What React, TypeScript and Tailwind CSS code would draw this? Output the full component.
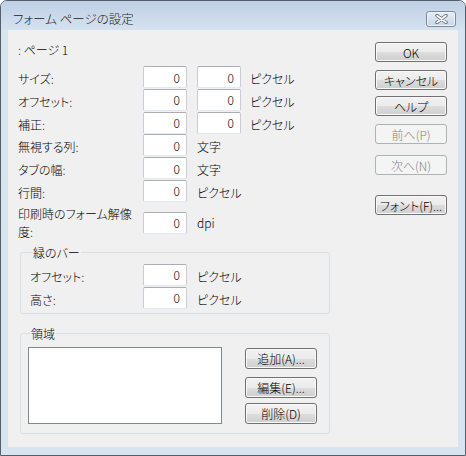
import React from "react";

const Field = ({ className = "" }: { className?: string }) => (
  <div
    className={
      "w-[44px] h-[22px] shrink-0 bg-white border border-t-[#abadb3] border-x-[#c9ccd3] border-b-[#e3e9ef] rounded-[2px] flex items-center justify-end pr-[6px] leading-[15px] " +
      className
    }
  >
    0
  </div>
);

const Btn = ({
  children,
  disabled,
  className = "",
  tall,
}: {
  children: React.ReactNode;
  disabled?: boolean;
  className?: string;
  tall?: boolean;
}) => (
  <div
    className={
      (tall ? "h-[21px] " : "h-[20px] ") +
      "w-[72px] shrink-0 rounded-[3px] border flex items-center justify-center leading-[15px] " +
      (disabled
        ? "border-[#adb2b5] bg-[#f4f4f4] text-[#838383] "
        : "border-[#707070] bg-[linear-gradient(#f2f2f2_0%,#ebebeb_50%,#dddddd_50%,#cfcfcf_100%)] shadow-[inset_0_0_0_1px_#fafafa] ") +
      className
    }
  >
    {children}
  </div>
);

const Row = ({
  label,
  unit,
  two,
  labelW = "w-[125px]",
}: {
  label: string;
  unit: string;
  two?: boolean;
  labelW?: string;
}) => (
  <div className="flex h-[22px] items-center">
    <span className={labelW + " shrink-0 pt-[3px] leading-[15px]"}>{label}</span>
    <Field />
    {two && <Field className="ml-[10px]" />}
    <span className={(two ? "ml-[9px]" : "ml-[10px]") + " pt-[3px] leading-[15px]"}>{unit}</span>
  </div>
);

export default function App() {
  return (
    <div className="w-[466px] h-[456px] flex flex-col border border-[#555f6b] rounded-t-[7px] bg-[#d9e4f1] overflow-hidden text-[12px] font-light text-black font-['Noto_Sans_CJK_JP',sans-serif] [font-feature-settings:'palt']">
      {/* title bar */}
      <div className="h-[29px] shrink-0 flex items-start bg-[linear-gradient(#bfd0e5,#d5e2f0)] pl-[12px] pr-[9px]">
        <span className="mt-[10px] leading-[15px] text-[12.5px] text-[#1a1a1a]">フォーム ページの設定</span>
        <div className="ml-auto mt-[10px] w-[30px] h-[16px] rounded-[3px] border border-[#7d8a9c] bg-[linear-gradient(#e6edf6,#c8d6e7)] shadow-[inset_0_0_0_1px_#eef3f9] flex items-center justify-center">
          <svg width="13" height="10" viewBox="0 0 13 10">
            <path d="M2 1.5 L11 8.5 M11 1.5 L2 8.5" stroke="#5d6877" strokeWidth="3.4" strokeLinecap="round" fill="none" />
            <path d="M2 1.5 L11 8.5 M11 1.5 L2 8.5" stroke="#ffffff" strokeWidth="1.6" strokeLinecap="round" fill="none" />
          </svg>
        </div>
      </div>

      {/* client */}
      <div className="mx-[7px] h-[417px] shrink-0 bg-[#f0f0f0] flex pt-[12px] pl-[10px] pr-[11px]">
        {/* left column */}
        <div className="w-[312px] flex flex-col">
          <div className="h-[15px] leading-[15px]">: ページ 1</div>
          <div className="mt-[9px] flex flex-col gap-[0.8px]">
            <Row label="サイズ:" unit="ピクセル" two />
            <Row label="オフセット:" unit="ピクセル" two />
            <Row label="補正:" unit="ピクセル" two />
            <Row label="無視する列:" unit="文字" />
            <Row label="タブの幅:" unit="文字" />
            <Row label="行間:" unit="ピクセル" />
          </div>
          <div className="mt-[3px] h-[36px] flex items-center">
            <div className="w-[125px] shrink-0 flex flex-col leading-[18px]">
              <span>印刷時のフォーム解像</span>
              <span>度:</span>
            </div>
            <Field />
            <span className="ml-[10px] leading-[15px]">dpi</span>
          </div>

          <fieldset className="mt-[5px] ml-[2px] w-[310px] border border-[#d5dfe5] rounded-[3px] pl-[9px] pt-[4px] pb-[4px]">
            <legend className="ml-[2px] px-[1px] leading-[14px]">緑のバー</legend>
            <div className="flex flex-col gap-[1px]">
              <Row label="オフセット:" unit="ピクセル" labelW="w-[113px]" />
              <Row label="高さ:" unit="ピクセル" labelW="w-[113px]" />
            </div>
          </fieldset>

          <fieldset className="mt-[13px] ml-[2px] w-[310px] border border-[#d5dfe5] rounded-[3px] pl-[7px] pt-[6px] pb-[9px]">
            <legend className="ml-[2px] px-[1px] leading-[14px]">領域</legend>
            <div className="flex">
              <div className="w-[194px] h-[77px] bg-white border border-[#828790]" />
              <div className="ml-[23px] flex flex-col">
                <Btn tall className="mt-[1px]">追加(A)...</Btn>
                <Btn tall className="mt-[8px]">編集(E)...</Btn>
                <Btn tall className="mt-[5px]">削除(D)</Btn>
              </div>
            </div>
          </fieldset>
        </div>

        {/* right column */}
        <div className="ml-auto w-[72px] flex flex-col">
          <Btn>OK</Btn>
          <Btn className="mt-[8px]">キャンセル</Btn>
          <Btn className="mt-[6px]">ヘルプ</Btn>
          <Btn disabled className="mt-[8px]">前へ(P)</Btn>
          <Btn disabled className="mt-[11px]">次へ(N)</Btn>
          <Btn className="mt-[20px]">フォント(F)...</Btn>
        </div>
      </div>
    </div>
  );
}
